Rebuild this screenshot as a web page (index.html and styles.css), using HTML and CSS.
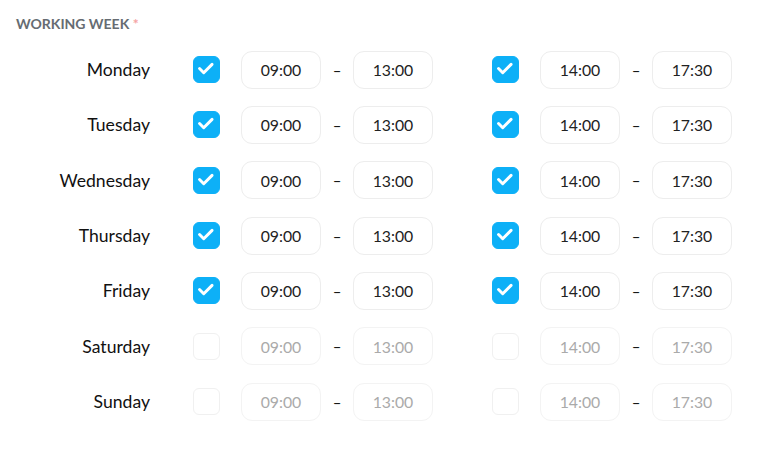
FILE: index.html
```html
<!DOCTYPE html>
<html lang="en">
<head>
    <meta charset="UTF-8">
    <meta name="viewport" content="width=device-width, initial-scale=1.0">
    <title>Working week</title>
    <link rel="stylesheet" href="styles.css">
</head>
<body>
    <div class="week">
        <h2 class="week-title">WORKING WEEK <span class="required">*</span></h2>

        <div class="day">
            <span class="day-name">Monday</span>
            <span class="check on"><svg viewBox="0 0 27 27"><path d="M7 13.5 L11.5 18 L20.5 9"/></svg></span>
            <span class="time">09:00</span><span class="dash">–</span><span class="time">13:00</span>
            <span class="check on second"><svg viewBox="0 0 27 27"><path d="M7 13.5 L11.5 18 L20.5 9"/></svg></span>
            <span class="time">14:00</span><span class="dash">–</span><span class="time">17:30</span>
        </div>
        <div class="day">
            <span class="day-name">Tuesday</span>
            <span class="check on"><svg viewBox="0 0 27 27"><path d="M7 13.5 L11.5 18 L20.5 9"/></svg></span>
            <span class="time">09:00</span><span class="dash">–</span><span class="time">13:00</span>
            <span class="check on second"><svg viewBox="0 0 27 27"><path d="M7 13.5 L11.5 18 L20.5 9"/></svg></span>
            <span class="time">14:00</span><span class="dash">–</span><span class="time">17:30</span>
        </div>
        <div class="day">
            <span class="day-name">Wednesday</span>
            <span class="check on"><svg viewBox="0 0 27 27"><path d="M7 13.5 L11.5 18 L20.5 9"/></svg></span>
            <span class="time">09:00</span><span class="dash">–</span><span class="time">13:00</span>
            <span class="check on second"><svg viewBox="0 0 27 27"><path d="M7 13.5 L11.5 18 L20.5 9"/></svg></span>
            <span class="time">14:00</span><span class="dash">–</span><span class="time">17:30</span>
        </div>
        <div class="day">
            <span class="day-name">Thursday</span>
            <span class="check on"><svg viewBox="0 0 27 27"><path d="M7 13.5 L11.5 18 L20.5 9"/></svg></span>
            <span class="time">09:00</span><span class="dash">–</span><span class="time">13:00</span>
            <span class="check on second"><svg viewBox="0 0 27 27"><path d="M7 13.5 L11.5 18 L20.5 9"/></svg></span>
            <span class="time">14:00</span><span class="dash">–</span><span class="time">17:30</span>
        </div>
        <div class="day">
            <span class="day-name">Friday</span>
            <span class="check on"><svg viewBox="0 0 27 27"><path d="M7 13.5 L11.5 18 L20.5 9"/></svg></span>
            <span class="time">09:00</span><span class="dash">–</span><span class="time">13:00</span>
            <span class="check on second"><svg viewBox="0 0 27 27"><path d="M7 13.5 L11.5 18 L20.5 9"/></svg></span>
            <span class="time">14:00</span><span class="dash">–</span><span class="time">17:30</span>
        </div>
        <div class="day off">
            <span class="day-name">Saturday</span>
            <span class="check"></span>
            <span class="time">09:00</span><span class="dash">–</span><span class="time">13:00</span>
            <span class="check second"></span>
            <span class="time">14:00</span><span class="dash">–</span><span class="time">17:30</span>
        </div>
        <div class="day off">
            <span class="day-name">Sunday</span>
            <span class="check"></span>
            <span class="time">09:00</span><span class="dash">–</span><span class="time">13:00</span>
            <span class="check second"></span>
            <span class="time">14:00</span><span class="dash">–</span><span class="time">17:30</span>
        </div>
    </div>
</body>
</html>
```

FILE: styles.css
```css
body {
    margin: 0;
    font-family: Lato, "Open Sans", sans-serif;
    background: #fff;
    color: #111;
}
.week {
    padding: 16px 0 0 16px;
}
.week-title {
    margin: 0;
    height: 26px;
    font-size: 14px;
    line-height: 16px;
    font-weight: 700;
    color: #666c72;
}
.required {
    color: #f5a3a3;
}
.day {
    display: flex;
    align-items: center;
    height: 55.33px;
}
.day-name {
    width: 134px;
    text-align: right;
    font-size: 17.6px;
}
.check {
    width: 27px;
    height: 27px;
    margin: 0 21px 0 43px;
    box-sizing: border-box;
    border: 1px solid #ececec;
    border-radius: 6px;
    display: flex;
}
.check.second {
    margin-left: 59px;
}
.check.on {
    background: #0db0f7;
    border-color: #0db0f7;
}
.check svg {
    width: 100%;
    height: 100%;
}
.check path {
    fill: none;
    stroke: #fff;
    stroke-width: 3.2;
    stroke-linecap: round;
    stroke-linejoin: round;
    transform: translate(-1px, -1px);
}
.time {
    width: 80px;
    height: 38px;
    box-sizing: border-box;
    border: 1px solid #ededed;
    border-radius: 11px;
    display: flex;
    align-items: center;
    justify-content: center;
    font-size: 15.8px;
    color: #222;
}
.dash {
    width: 32px;
    text-align: center;
    font-size: 15px;
}
.off .time {
    color: #aaa;
    border-color: #f3f3f3;
}
.off .check {
    border-color: #f0f0f0;
}
```
